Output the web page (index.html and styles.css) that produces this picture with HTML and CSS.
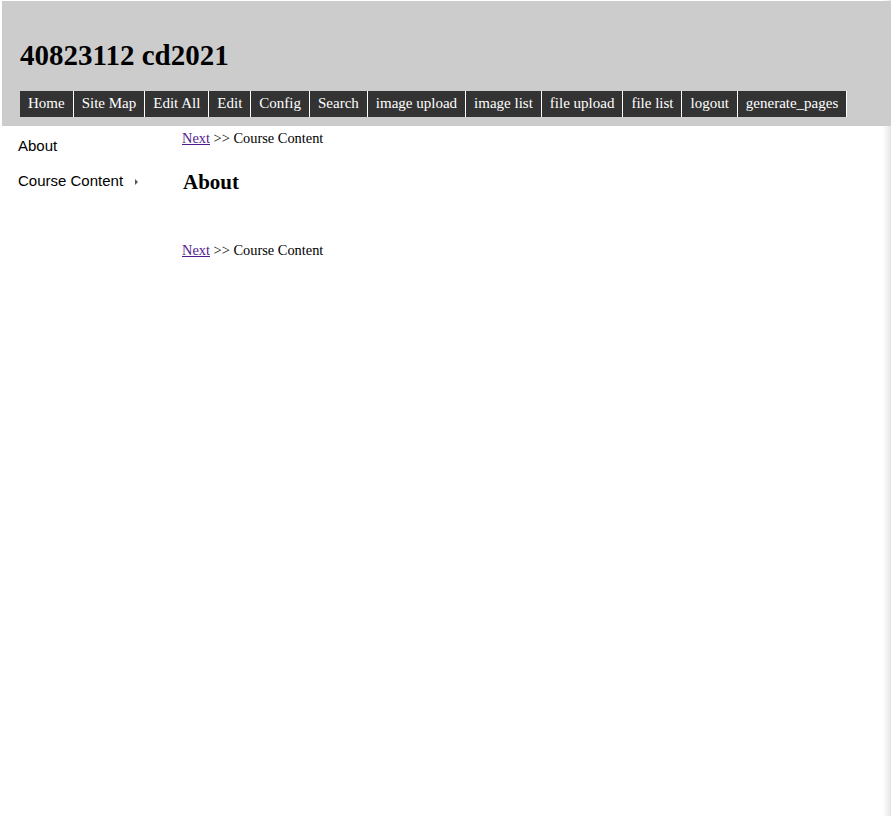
FILE: index.html
```html
<!DOCTYPE html>
<html lang="en">
<head>
  <meta charset="UTF-8">
  <title>40823112 cd2021</title>
  <link rel="stylesheet" href="styles.css">
</head>
<body>
  <div class="page">
    <header class="top">
      <h1>40823112 cd2021</h1>
      <ul class="nav">
        <li><a href="#">Home</a></li>
        <li><a href="#">Site Map</a></li>
        <li><a href="#">Edit All</a></li>
        <li><a href="#">Edit</a></li>
        <li><a href="#">Config</a></li>
        <li><a href="#">Search</a></li>
        <li><a href="#">image upload</a></li>
        <li><a href="#">image list</a></li>
        <li><a href="#">file upload</a></li>
        <li><a href="#">file list</a></li>
        <li><a href="#">logout</a></li>
        <li><a href="#">generate_pages</a></li>
      </ul>
    </header>

    <div class="body">
      <!-- left menu -->
      <ul class="side">
        <li>About</li>
        <li>Course Content <span class="arrow"></span></li>
      </ul>

      <!-- page content -->
      <div class="content">
        <p class="pager"><a href="#">Next</a> &gt;&gt; Course Content</p>
        <h2>About</h2>
        <p class="pager bottom"><a href="#">Next</a> &gt;&gt; Course Content</p>
      </div>
    </div>
  </div>
</body>
</html>
```

FILE: styles.css
```css
* {
  box-sizing: border-box;
}

body {
  margin: 0;
  font-family: "Liberation Serif", "Times New Roman", serif;
  background: #ffffff;
  overflow: hidden;
}

.page {
  height: 816px;
  padding: 1px 0 0 2px;
  background: linear-gradient(to right, rgba(255,255,255,0) 882px, #f6f6f6 886px, #e4e4e4 891px);
}

.top {
  background-color: #cccccc;
  padding: 36px 0 8px 18px;
  height: 125px;
}

.top h1 {
  margin: 0 0 18px;
  font-size: 29px;
  line-height: 36px;
  font-weight: bold;
  color: #000;
}

.nav {
  list-style: none;
  margin: 0;
  padding: 0;
  display: flex;
}

.nav li {
  background-color: #333333;
  border-right: 1px solid #ffffff;
}

.nav li a {
  display: block;
  padding: 0 8px;
  height: 26px;
  line-height: 25px;
  font-size: 15px;
  color: #ffffff;
  text-decoration: none;
}

.body {
  display: flex;
}

.side {
  list-style: none;
  margin: 0;
  padding: 9px 0 0 16px;
  width: 180px;
  font-family: "Liberation Sans", Arial, sans-serif;
  font-size: 15px;
  color: #000;
}

.side li {
  height: 35px;
  line-height: 22px;
}

.arrow {
  display: inline-block;
  width: 0;
  height: 0;
  margin-left: 8px;
  border-top: 3px solid transparent;
  border-bottom: 3px solid transparent;
  border-left: 3px solid #555;
  vertical-align: 1px;
}

.content {
  padding-top: 3px;
  font-size: 14.4px;
}

.pager {
  margin: 0;
  line-height: 18px;
}

.pager a {
  color: #551a8b;
}

.content h2 {
  margin: 22px 0 0 1px;
  font-size: 21px;
  line-height: 26px;
}

.pager.bottom {
  margin-top: 46px;
}
```
